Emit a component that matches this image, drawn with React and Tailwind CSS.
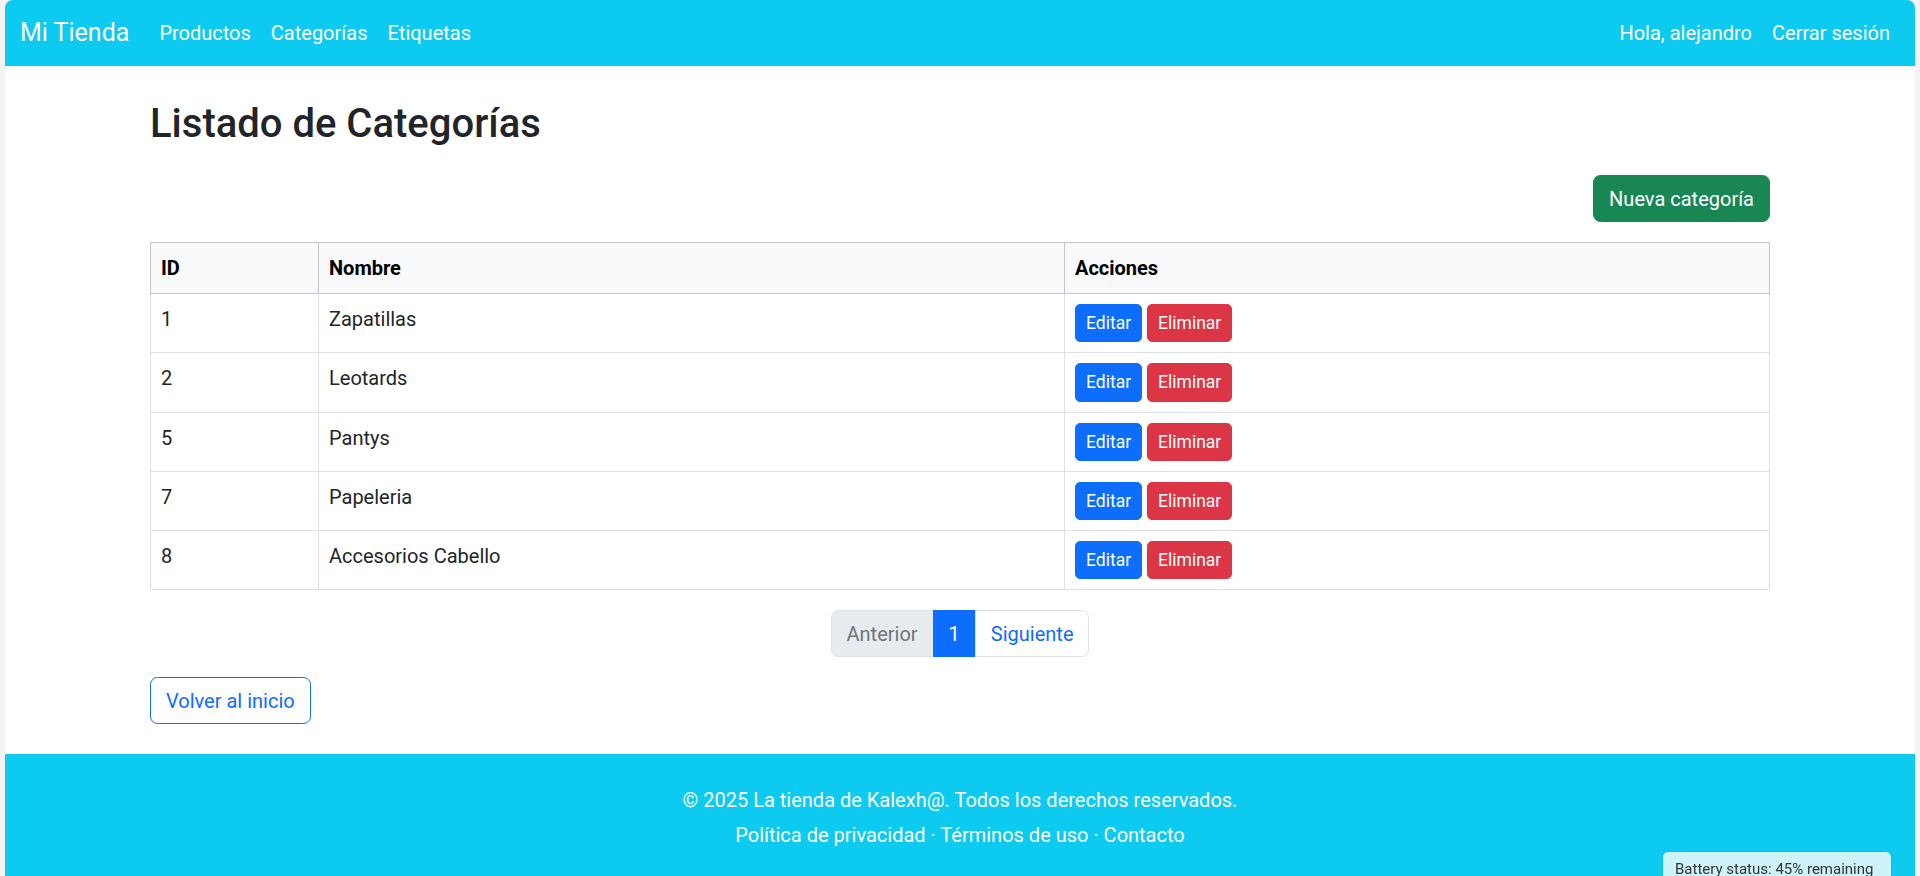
import React from 'react'

const categorias = [
  { id: 1, nombre: 'Zapatillas' },
  { id: 2, nombre: 'Leotards' },
  { id: 5, nombre: 'Pantys' },
  { id: 7, nombre: 'Papeleria' },
  { id: 8, nombre: 'Accesorios Cabello' },
]

export default function App() {
  return (
    <div className="min-h-screen bg-[#f3f3f3] px-[5px] font-['Roboto',sans-serif] text-[20px] leading-[1.5] text-[#212529]">
      <div className="bg-white rounded-t-[8px] overflow-hidden">
        {/* Navbar */}
        <nav className="bg-[#0dcaf0] h-[66px] px-[15px] flex items-center text-white">
          <a href="#" className="text-[25px] leading-[37.5px] mr-[20px]">Mi Tienda</a>
          <div className="flex">
            <a href="#" className="px-[10px]">Productos</a>
            <a href="#" className="px-[10px]">Categorías</a>
            <a href="#" className="px-[10px]">Etiquetas</a>
          </div>
          <div className="flex ml-auto">
            <span className="px-[10px]">Hola, alejandro</span>
            <a href="#" className="px-[10px]">Cerrar sesión</a>
          </div>
        </nav>

        {/* Contenido */}
        <main className="w-[1650px] mx-auto px-[15px]">
          <h1 className="mt-[34px] mb-[27px] text-[40px] leading-[1.2] font-medium">Listado de Categorías</h1>

          <div className="flex justify-end mb-[20px]">
            <button className="bg-[#198754] border border-[#198754] text-white px-[15px] py-[7.5px] rounded-[7.5px] leading-[30px]">
              Nueva categoría
            </button>
          </div>

          <table className="w-full border-collapse mb-[20px] text-left">
            <thead>
              <tr className="bg-[#f8f9fa] text-black">
                <th className="w-[168px] border border-[#c6c7c8] p-[10px] font-bold align-bottom">ID</th>
                <th className="w-[746px] border border-[#c6c7c8] p-[10px] font-bold align-bottom">Nombre</th>
                <th className="border border-[#c6c7c8] p-[10px] font-bold align-bottom">Acciones</th>
              </tr>
            </thead>
            <tbody>
              {categorias.map(function(c) {
                return (
                  <tr key={c.id}>
                    <td className="border border-[#dee2e6] p-[10px] align-top">{c.id}</td>
                    <td className="border border-[#dee2e6] p-[10px] align-top">{c.nombre}</td>
                    <td className="border border-[#dee2e6] p-[10px] align-top">
                      <div className="flex gap-[5px]">
                        <button className="bg-[#0d6efd] border border-[#0d6efd] text-white text-[17.5px] leading-[26.25px] px-[10px] py-[5px] rounded-[5px]">Editar</button>
                        <button className="bg-[#dc3545] border border-[#dc3545] text-white text-[17.5px] leading-[26.25px] px-[10px] py-[5px] rounded-[5px]">Eliminar</button>
                      </div>
                    </td>
                  </tr>
                )
              })}
            </tbody>
          </table>

          {/* Paginación */}
          <div className="flex justify-center mb-[20px]">
            <span className="bg-[#e9ecef] border border-[#dee2e6] text-[#6c757d] px-[15px] py-[7.5px] leading-[30px] rounded-l-[7.5px]">Anterior</span>
            <span className="bg-[#0d6efd] border border-[#0d6efd] text-white px-[15px] py-[7.5px] leading-[30px] -ml-px">1</span>
            <a href="#" className="bg-white border border-[#dee2e6] text-[#0d6efd] px-[15px] py-[7.5px] leading-[30px] -ml-px rounded-r-[7.5px]">Siguiente</a>
          </div>

          <a href="#" className="inline-block border border-[#0d6efd] text-[#0d6efd] px-[15px] py-[7.5px] leading-[30px] rounded-[7.5px]">
            Volver al inicio
          </a>
        </main>

        {/* Footer */}
        <footer className="mt-[30px] bg-[#0dcaf0] text-white text-center pt-[31px] pb-[30px]">
          <p className="mb-[5px]">© 2025 La tienda de Kalexh@. Todos los derechos reservados.</p>
          <p>
            <a href="#">Política de privacidad</a> · <a href="#">Términos de uso</a> · <a href="#">Contacto</a>
          </p>
        </footer>
      </div>

      {/* Tooltip del sistema */}
      <div className="fixed left-[1663px] top-[852px] w-[228px] h-[40px] bg-[#cdf3fb] rounded-[5px] px-[12px] pt-[7px] text-[15px] leading-[20px] text-[#333] shadow-[0_0_2px_rgba(0,0,0,0.15)]">
        Battery status: 45% remaining
      </div>
    </div>
  )
}
